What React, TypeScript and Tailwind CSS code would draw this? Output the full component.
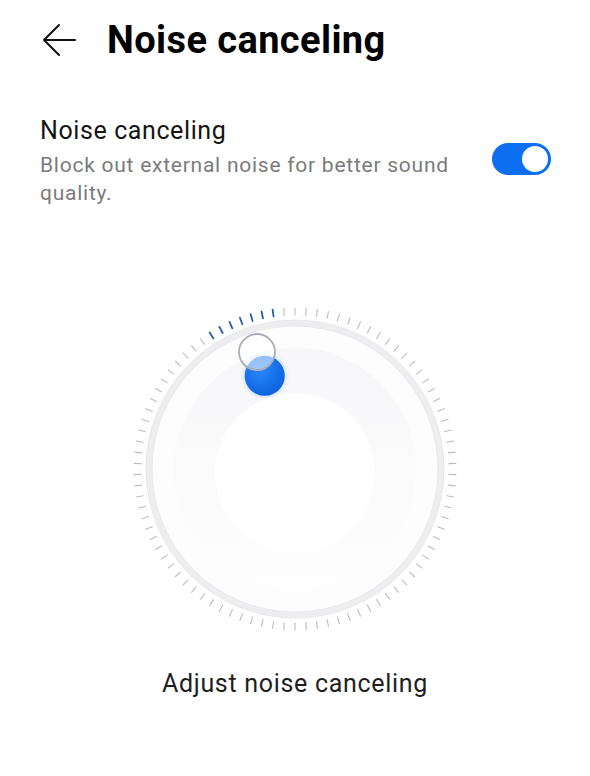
import React from "react";

function Dial() {
  const C = 170;
  const ticks = [];
  for (let i = 0; i < 90; i++) {
    const deg = i * 4 - 180;
    const a = (deg * Math.PI) / 180;
    const r1 = 154;
    const r2 = 161;
    const x1 = C + r1 * Math.sin(a);
    const y1 = C - r1 * Math.cos(a);
    const x2 = C + r2 * Math.sin(a);
    const y2 = C - r2 * Math.cos(a);
    const blue = deg >= -32 && deg <= -8;
    ticks.push(
      <line
        key={i}
        x1={x1}
        y1={y1}
        x2={x2}
        y2={y2}
        stroke={blue ? "#245fae" : "#bdbdc0"}
        strokeWidth={blue ? 1.8 : 1.1}
        strokeLinecap="round"
      />
    );
  }
  const ang = (-18 * Math.PI) / 180;
  const kx = C + 98 * Math.sin(ang);
  const ky = C - 98 * Math.cos(ang);
  const ox = C + 123 * Math.sin(ang);
  const oy = C - 123 * Math.cos(ang);
  return (
    <svg width="340" height="340" viewBox="0 0 340 340">
      <defs>
        <linearGradient id="band" x1="0" y1="0" x2="0" y2="1">
          <stop offset="0" stopColor="#f7f7f9" />
          <stop offset="0.55" stopColor="#fbfbfc" />
          <stop offset="1" stopColor="#fefefe" />
        </linearGradient>
        <radialGradient id="knob" cx="0.4" cy="0.35" r="0.7">
          <stop offset="0" stopColor="#2a86ff" />
          <stop offset="1" stopColor="#0a62dc" />
        </radialGradient>
        <filter id="glow" x="-50%" y="-50%" width="200%" height="200%">
          <feGaussianBlur stdDeviation="2" />
        </filter>
      </defs>
      {ticks}
      <circle cx={C} cy={C} r={146} fill="#fdfdfd" stroke="#eeeef0" strokeWidth={6} />
      <circle cx={C} cy={C} r={149} fill="none" stroke="#e4e4e7" strokeWidth={0.8} />
      <circle cx={C} cy={C} r={143} fill="none" stroke="#e6e6e9" strokeWidth={0.8} />
      <circle cx={C} cy={C} r={121} fill="url(#band)" />
      <circle cx={C} cy={C + 4} r={80} fill="#ffffff" />
      <circle cx={kx} cy={ky} r={21} fill="#5a9cff" opacity={0.35} filter="url(#glow)" />
      <circle cx={kx} cy={ky} r={20} fill="url(#knob)" />
      <circle cx={ox} cy={oy} r={18} fill="#ffffff" fillOpacity={0.55} stroke="#a9adb8" strokeWidth={1.8} />
    </svg>
  );
}

export default function App() {
  return (
    <div
      className="w-[590px] h-[776px] bg-white overflow-hidden"
      style={{ fontFamily: "Roboto, 'Noto Sans', sans-serif" }}
    >
      <div className="flex items-center h-[80px] pl-[42px] pb-[1px]">
        <svg width="34" height="34" viewBox="0 0 34 34" className="shrink-0">
          <path d="M33 17H2M17 2L2 17l15 15" fill="none" stroke="#111" strokeWidth="2" strokeLinecap="round" strokeLinejoin="round" />
        </svg>
        <h1 className="ml-[31px] text-[38px] font-bold text-black leading-none tracking-[0.4px]">
          Noise canceling
        </h1>
      </div>

      <div className="flex items-center pl-[40px] pr-[39px] pt-[36px]">
        <div className="flex-1">
          <div className="text-[25px] text-[#151515] leading-[30px] tracking-[0.6px]">Noise canceling</div>
          <div className="text-[21px] text-[#7b7b7b] leading-[28px] mt-[5px] w-[430px] tracking-[0.75px]">
            Block out external noise for better sound quality.
          </div>
        </div>
        <div className="relative w-[59px] h-[32px] rounded-full bg-[#0c6ef0] shrink-0 -mt-[5px]">
          <div className="absolute right-[3px] top-[3px] w-[26px] h-[26px] rounded-full bg-white" />
        </div>
      </div>

      <div className="flex justify-center mt-[92px]">
        <Dial />
      </div>

      <div className="text-center text-[25px] text-[#1e1e1e] mt-[29px] leading-[32px] tracking-[0.7px]">
        Adjust noise canceling
      </div>
    </div>
  );
}
